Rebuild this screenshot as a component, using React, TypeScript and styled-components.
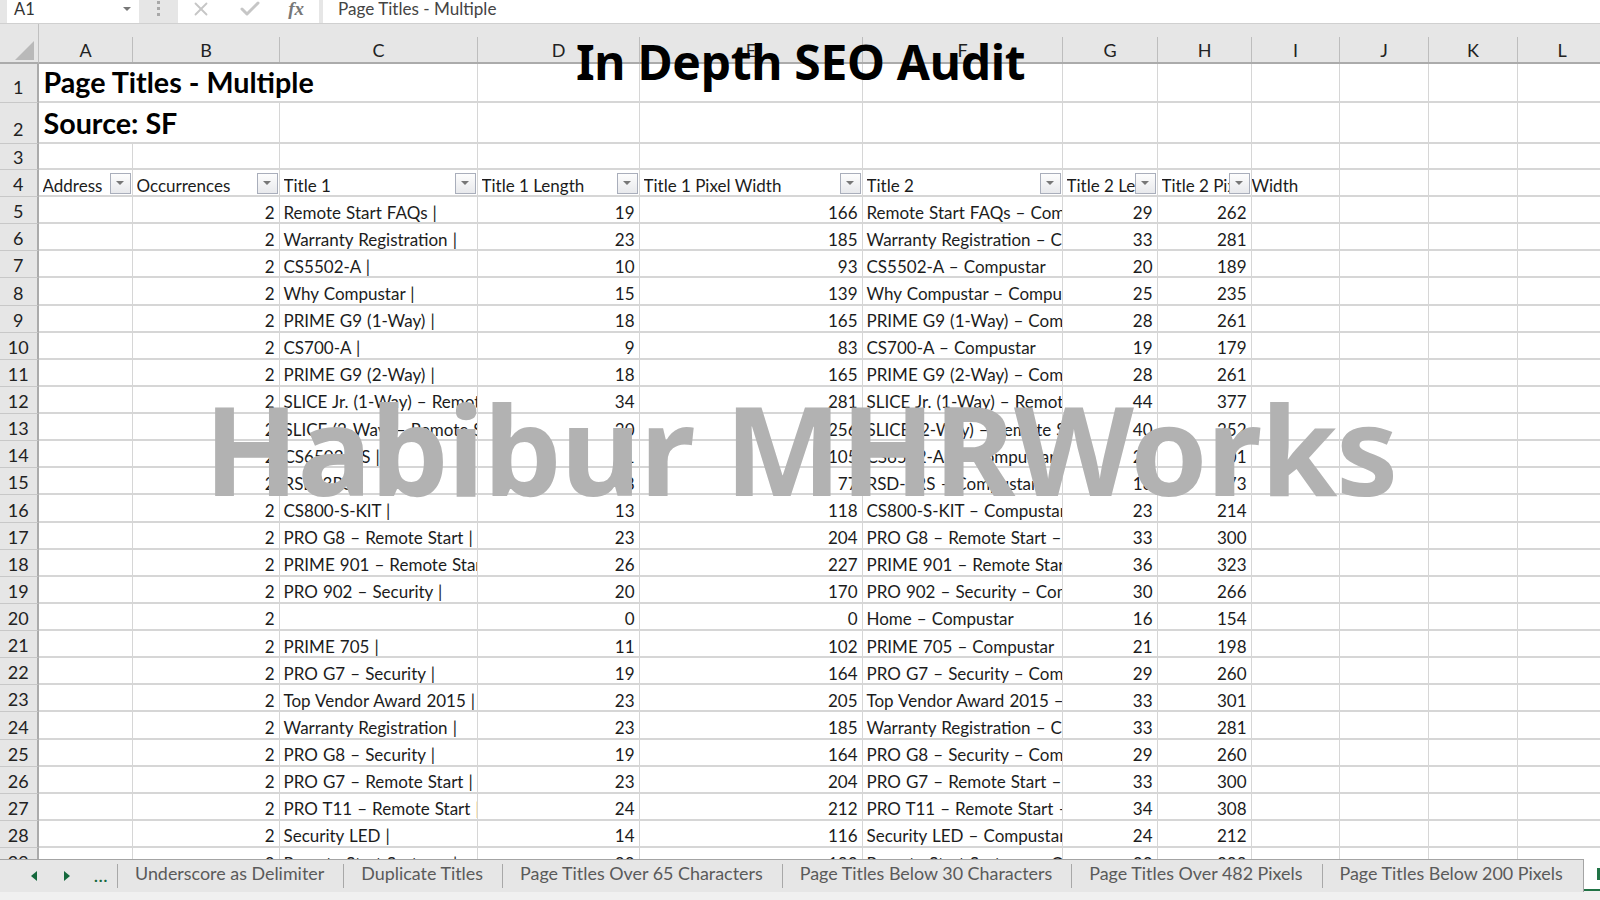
import React from "react"
import styled, { createGlobalStyle } from "styled-components"
import { X, Check } from "lucide-react"

const GRID_LINE = "#d6d6d6"
const HEAD_BG = "#e6e6e6"
const CELL_FONT = `"Lato", "Liberation Sans", sans-serif`

const GlobalStyle = createGlobalStyle`
    html, body {
        margin: 0;
        padding: 0;
        width: 1600px;
        height: 900px;
        overflow: hidden;
        background: #f0f0f0;
    }
`

const Page = styled.div`
    position: relative;
    width: 1600px;
    height: 900px;
    overflow: hidden;
    display: flex;
    flex-direction: column;
    font-family: ${CELL_FONT};
    color: #1c1c1c;
`

const FormulaBar = styled.div`
    flex: 0 0 24px;
    box-sizing: border-box;
    display: flex;
    align-items: flex-start;
    background: ${HEAD_BG};
    border-bottom: 1px solid #d0d0d0;
    padding-left: 7px;
`

const NameBox = styled.div`
    width: 132px;
    height: 23px;
    box-sizing: border-box;
    background: #fff;
    display: flex;
    align-items: center;
    justify-content: space-between;
    padding: 0 7px 5px 7px;
    font-size: 16.5px;
    color: #333;
`

const Caret = styled.span`
    width: 0;
    height: 0;
    border-left: 4px solid transparent;
    border-right: 4px solid transparent;
    border-top: 4px solid #777;
    margin-right: 1px;
`

const Grip = styled.div`
    width: 39px;
    display: flex;
    flex-direction: column;
    align-items: center;
    gap: 3px;
    padding-top: 1px;
`

const GripDot = styled.span`
    width: 3px;
    height: 3px;
    background: #a8a8a8;
`

const ActionBox = styled.div`
    width: 141px;
    height: 23px;
    background: #fff;
    display: flex;
    align-items: center;
    padding: 0 15px 5px 12px;
    box-sizing: border-box;
    justify-content: space-between;
    color: #c6c6c6;
`

const Fx = styled.span`
    font-family: "Liberation Serif", serif;
    font-style: italic;
    font-weight: 700;
    font-size: 19px;
    color: #777;
`

const FormulaInput = styled.div`
    flex: 1;
    height: 23px;
    margin-left: 4px;
    background: #fff;
    padding: 0 0 6px 15px;
    box-sizing: border-box;
    display: flex;
    align-items: center;
    font-size: 17.1px;
    color: #444;
`

const Sheet = styled.div`
    flex: 0 0 835px;
    display: grid;
    grid-template-columns: 38.5px 94px 147px 198px 162px 223px 200px 95px 94px 88px 89px 89px 89px 89px;
    grid-template-rows: 40px 39px 41px 26px 27px repeat(25, 27.14px);
    overflow: hidden;
    background: #fff;
`

const Corner = styled.div`
    background: ${HEAD_BG};
    border-right: 1px solid #c0c0c0;
    border-bottom: 2px solid #ababab;
    box-sizing: border-box;
    padding: 17px 0 0 15px;
`

const ColHead = styled.div`
    background: ${HEAD_BG};
    box-sizing: border-box;
    border-bottom: 2px solid #ababab;
    display: flex;
    align-items: flex-end;
    justify-content: center;
    font-size: 18px;
    line-height: 24px;
    color: #222;
    position: relative;
    &::after {
        content: "";
        position: absolute;
        right: 0;
        top: 13px;
        bottom: 0;
        width: 1px;
        background: #bdbdbd;
    }
`

const RowHead = styled.div<{ $lift?: number }>`
    background: ${HEAD_BG};
    box-sizing: border-box;
    border-right: 2px solid #ababab;
    border-bottom: 1px solid #c8c8c8;
    display: flex;
    align-items: flex-end;
    justify-content: center;
    padding-bottom: ${p => p.$lift ?? 1}px;
    font-size: 18px;
    line-height: 22px;
    color: #222;
`

const Cell = styled.div<{ $right?: boolean; $span?: number }>`
    ${p => (p.$span ? `grid-column: span ${p.$span};` : "")}
    box-sizing: border-box;
    min-width: 0;
    overflow: hidden;
    white-space: nowrap;
    border-right: 1px solid ${GRID_LINE};
    border-bottom: 2px solid ${GRID_LINE};
    padding: 5px 4px 0;
    display: flex;
    align-items: center;
    justify-content: ${p => (p.$right ? "flex-end" : "flex-start")};
    font-size: 17px;
    word-spacing: 0.7px;
    color: #1c1c1c;
`

const BigCell = styled(Cell)`
    font-size: 28.7px;
    font-weight: 700;
    word-spacing: 0;
    color: #000;
    padding: 0 0 2px 5px;
    align-items: flex-end;
    line-height: 33px;
`

const HeaderCell = styled(Cell)`
    padding: 0 1px 0 4px;
    word-spacing: 0;
    justify-content: space-between;
`

const HeaderLabel = styled.span`
    flex: 1;
    min-width: 0;
    overflow: hidden;
    padding-top: 5px;
`

const OverflowCell = styled(Cell)`
    padding-left: 0;
`

const FilterButton = styled.span`
    flex: 0 0 21px;
    height: 21px;
    margin-top: 1px;
    box-sizing: border-box;
    border: 1px solid #a9aebb;
    background: linear-gradient(#fdfdfd, #e8e9ec);
    display: flex;
    align-items: center;
    justify-content: center;
    &::before {
        content: "";
        border-left: 4px solid transparent;
        border-right: 4px solid transparent;
        border-top: 4px solid #777;
    }
`

const TabBar = styled.div`
    flex: 1;
    display: flex;
    align-items: flex-start;
    background: #f0f0f0;
`

const TabStrip = styled.div`
    width: 1584px;
    height: 33px;
    box-sizing: border-box;
    background: ${HEAD_BG};
    border-top: 1px solid #a4a4a4;
    border-right: 1px solid #a4a4a4;
    display: flex;
    align-items: center;
`

const Nav = styled.div`
    width: 117px;
    flex: none;
    display: flex;
    align-items: center;
    padding-left: 31px;
    box-sizing: border-box;
    gap: 27px;
`

const NavArrow = styled.span<{ $dir: "left" | "right" }>`
    width: 0;
    height: 0;
    border-top: 5px solid transparent;
    border-bottom: 5px solid transparent;
    ${p => (p.$dir === "left" ? "border-right: 6px solid #14683c;" : "border-left: 6px solid #14683c;")}
`

const NavMore = styled.span`
    font-size: 16px;
    font-weight: 700;
    line-height: 10px;
    letter-spacing: 1px;
    color: #14683c;
    margin-left: -3px;
`

const Tab = styled.div`
    flex: none;
    height: 24px;
    display: flex;
    align-items: center;
    padding: 0 19px 6px 17px;
    box-sizing: border-box;
    border-left: 1px solid #a8a8a8;
    font-size: 17.9px;
    color: #5a5a5a;
    white-space: nowrap;
`

const ActiveTab = styled.div`
    flex: 1;
    height: 30px;
    border-bottom: 2px solid #217346;
    background: #fff;
    display: flex;
    align-items: center;
    justify-content: flex-end;
`

const ActiveTabLabel = styled.span`
    width: 3px;
    height: 12px;
    background: #217346;
`

const Title = styled.div`
    position: absolute;
    top: 31px;
    left: 576px;
    font-family: "Noto Sans", "Open Sans", sans-serif;
    font-size: 48px;
    font-weight: 700;
    letter-spacing: -0.3px;
    line-height: 62px;
    color: #000;
    white-space: nowrap;
`

const Watermark = styled.div`
    position: absolute;
    top: 368px;
    left: 204px;
    font-family: "Noto Sans", "Open Sans", sans-serif;
    font-size: 124px;
    font-weight: 700;
    letter-spacing: -1.3px;
    line-height: 160px;
    color: #b2b2b2;
    white-space: nowrap;
`

type Row = [string, number, number, string, number, number]

const rows: Row[] = [
    ["Remote Start FAQs |", 19, 166, "Remote Start FAQs – Compustar", 29, 262],
    ["Warranty Registration |", 23, 185, "Warranty Registration – Compustar", 33, 281],
    ["CS5502-A |", 10, 93, "CS5502-A – Compustar", 20, 189],
    ["Why Compustar |", 15, 139, "Why Compustar – Compustar", 25, 235],
    ["PRIME G9 (1-Way) |", 18, 165, "PRIME G9 (1-Way) – Compustar", 28, 261],
    ["CS700-A |", 9, 83, "CS700-A – Compustar", 19, 179],
    ["PRIME G9 (2-Way) |", 18, 165, "PRIME G9 (2-Way) – Compustar", 28, 261],
    ["SLICE Jr. (1-Way) – Remote Start |", 34, 281, "SLICE Jr. (1-Way) – Remote Start", 44, 377],
    ["SLICE (2-Way) – Remote Start |", 30, 256, "SLICE (2-Way) – Remote Start", 40, 352],
    ["CS6502-AS |", 11, 105, "CS6502-AS – Compustar", 21, 201],
    ["RSD-3RS |", 8, 77, "RSD-3RS – Compustar", 18, 173],
    ["CS800-S-KIT |", 13, 118, "CS800-S-KIT – Compustar", 23, 214],
    ["PRO G8 – Remote Start |", 23, 204, "PRO G8 – Remote Start – Compustar", 33, 300],
    ["PRIME 901 – Remote Start |", 26, 227, "PRIME 901 – Remote Start – Compustar", 36, 323],
    ["PRO 902 – Security |", 20, 170, "PRO 902 – Security – Compustar", 30, 266],
    ["", 0, 0, "Home – Compustar", 16, 154],
    ["PRIME 705 |", 11, 102, "PRIME 705 – Compustar", 21, 198],
    ["PRO G7 – Security |", 19, 164, "PRO G7 – Security – Compustar", 29, 260],
    ["Top Vendor Award 2015 |", 23, 205, "Top Vendor Award 2015 – Compustar", 33, 301],
    ["Warranty Registration |", 23, 185, "Warranty Registration – Compustar", 33, 281],
    ["PRO G8 – Security |", 19, 164, "PRO G8 – Security – Compustar", 29, 260],
    ["PRO G7 – Remote Start |", 23, 204, "PRO G7 – Remote Start – Compustar", 33, 300],
    ["PRO T11 – Remote Start |", 24, 212, "PRO T11 – Remote Start – Compustar", 34, 308],
    ["Security LED |", 14, 116, "Security LED – Compustar", 24, 212],
    ["Remote Start Systems |", 22, 193, "Remote Start Systems – Compustar", 32, 289],
]

const columns = ["A", "B", "C", "D", "E", "F", "G", "H", "I", "J", "K", "L", "M"]
const headers = ["Address", "Occurrences", "Title 1", "Title 1 Length", "Title 1 Pixel Width", "Title 2", "Title 2 Length", "Title 2 Pixel Width"]
const tabs = [
    "Underscore as Delimiter",
    "Duplicate Titles",
    "Page Titles Over 65 Characters",
    "Page Titles Below 30 Characters",
    "Page Titles Over 482 Pixels",
    "Page Titles Below 200 Pixels",
]

const blanks = (n: number) => Array.from({ length: n }, (_, i) => <Cell key={i} />)

const App = () => {
    return (
        <Page>
            <GlobalStyle />
            <FormulaBar>
                <NameBox>A1<Caret /></NameBox>
                <Grip><GripDot /><GripDot /><GripDot /></Grip>
                <ActionBox>
                    <X size={22} strokeWidth={2} />
                    <Check size={24} strokeWidth={3} />
                    <Fx>fx</Fx>
                </ActionBox>
                <FormulaInput>Page Titles - Multiple</FormulaInput>
            </FormulaBar>
            <Sheet>
                <Corner>
                    <svg width="20" height="19" viewBox="0 0 20 19">
                        <path d="M19 0 V19 H0 Z" fill="#b9b9b9" />
                    </svg>
                </Corner>
                {columns.map(c => <ColHead key={c}>{c}</ColHead>)}

                <RowHead $lift={4}>1</RowHead>
                <BigCell $span={3}>Page Titles - Multiple</BigCell>
                {blanks(10)}

                <RowHead $lift={3}>2</RowHead>
                <BigCell $span={2}>Source: SF</BigCell>
                {blanks(11)}

                <RowHead>3</RowHead>
                {blanks(13)}

                <RowHead>4</RowHead>
                {headers.map(h => (
                    <HeaderCell key={h}>
                        <HeaderLabel>{h}</HeaderLabel>
                        <FilterButton />
                    </HeaderCell>
                ))}
                <OverflowCell>Width</OverflowCell>
                {blanks(4)}

                {rows.map((r, i) => (
                    <React.Fragment key={i}>
                        <RowHead>{i + 5}</RowHead>
                        <Cell />
                        <Cell $right>2</Cell>
                        <Cell>{r[0]}</Cell>
                        <Cell $right>{r[1]}</Cell>
                        <Cell $right>{r[2]}</Cell>
                        <Cell>{r[3]}</Cell>
                        <Cell $right>{r[4]}</Cell>
                        <Cell $right>{r[5]}</Cell>
                        {blanks(5)}
                    </React.Fragment>
                ))}
            </Sheet>
            <TabBar>
                <TabStrip>
                    <Nav>
                        <NavArrow $dir="left" />
                        <NavArrow $dir="right" />
                        <NavMore>...</NavMore>
                    </Nav>
                    {tabs.map(t => <Tab key={t}>{t}</Tab>)}
                </TabStrip>
                <ActiveTab><ActiveTabLabel /></ActiveTab>
            </TabBar>
            <Title>In Depth SEO Audit</Title>
            <Watermark>Habibur MHRWorks</Watermark>
        </Page>
    )
}

export default App
